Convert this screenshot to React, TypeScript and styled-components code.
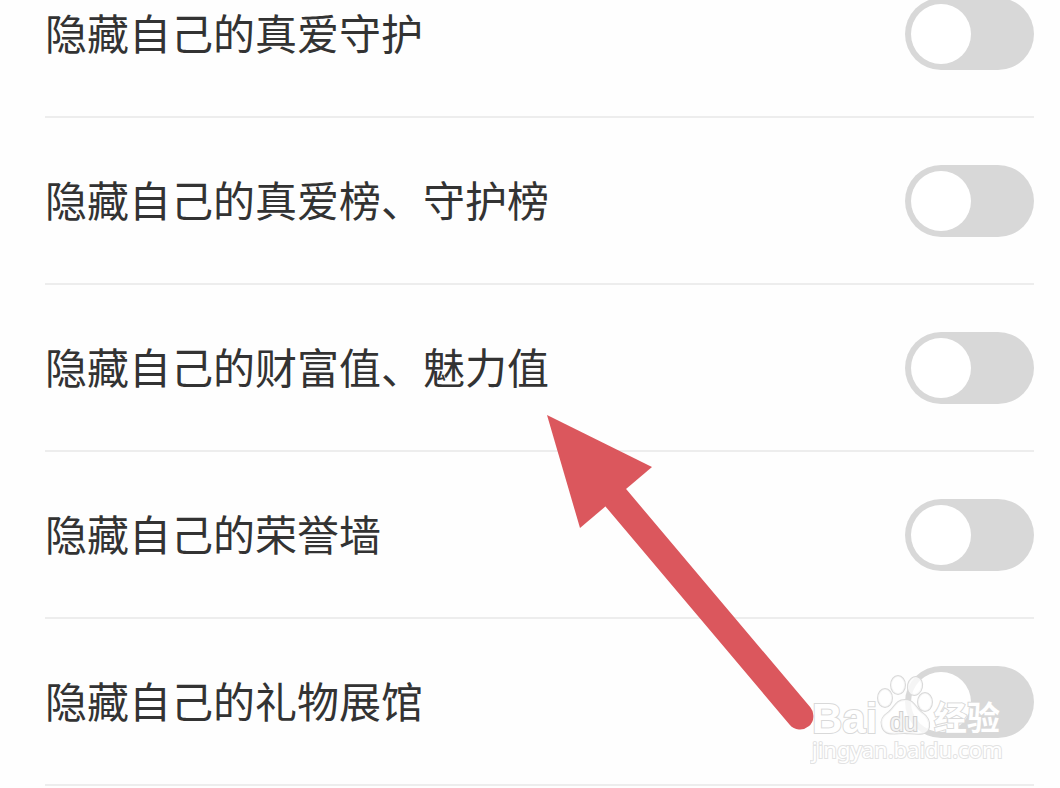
import React, { useState } from "react";
import styled, { createGlobalStyle } from "styled-components";

const GlobalStyle = createGlobalStyle`
  * { box-sizing: border-box; }
  body {
    margin: 0;
    background: #fefefe;
    color: #333;
    font-family: "Noto Sans CJK SC", sans-serif;
  }
`;

const Page = styled.main`
  position: relative;
  overflow: hidden;
  min-height: 100vh;
  padding: 0 26px 0 45px;
`;

/* The list is scrolled part of the way into its first row. */
const SettingList = styled.ul`
  list-style: none;
  margin: -49px 0 0;
  padding: 0;
`;

const SettingRow = styled.li`
  border-bottom: 2px solid #ededed;
`;

const SettingLabel = styled.label`
  display: flex;
  align-items: center;
  justify-content: space-between;
  height: 165px;
  font-size: 42px;
  line-height: 60px;
  cursor: pointer;
`;

const SettingName = styled.span`
  padding-bottom: 3px;
`;

const Switch = styled.input`
  appearance: none;
  flex: none;
  display: flex;
  align-items: center;
  width: 129px;
  height: 72px;
  margin: 0;
  padding: 0 6px;
  border-radius: 36px;
  background: #d8d8d8;
  cursor: pointer;

  &::before {
    content: "";
    width: 60px;
    height: 60px;
    border-radius: 50%;
    background: #fff;
  }

  &:checked {
    justify-content: flex-end;
    background: #4cd964;
  }
`;

const Arrow = styled.svg`
  position: absolute;
  left: 546px;
  top: 414px;
  pointer-events: none;
`;

const Watermark = styled.svg`
  position: absolute;
  right: 50px;
  top: 666px;
  pointer-events: none;
  fill: rgba(255, 255, 255, 0.75);
  stroke: #d9d9d9;
  stroke-width: 2px;
  paint-order: stroke;
  font-weight: 700;
`;

const settings = [
  "隐藏自己的真爱守护",
  "隐藏自己的真爱榜、守护榜",
  "隐藏自己的财富值、魅力值",
  "隐藏自己的荣誉墙",
  "隐藏自己的礼物展馆",
];

function Setting({ name }: { name: string }) {
  const [on, setOn] = useState(false);
  return (
    <SettingRow>
      <SettingLabel>
        <SettingName>{name}</SettingName>
        <Switch type="checkbox" role="switch" checked={on} onChange={() => setOn(!on)} />
      </SettingLabel>
    </SettingRow>
  );
}

export default function App() {
  return (
    <Page>
      <GlobalStyle />
      <SettingList>
        {settings.map((name) => (
          <Setting key={name} name={name} />
        ))}
      </SettingList>
      <Arrow width="270" height="320" viewBox="546 414 270 320" aria-hidden="true">
        <path d="M616 498L800 716" stroke="#db575d" strokeWidth="27" strokeLinecap="round" />
        <path d="M547 415L652 467L580 528Z" fill="#db575d" />
      </Arrow>
      <Watermark width="200" height="104" viewBox="810 666 200 104">
        <text x="812" y="733" fontSize="42" fontFamily="Liberation Sans, sans-serif" fill="#fff">Bai</text>
        <ellipse cx="885" cy="698" rx="7" ry="9" />
        <ellipse cx="898" cy="685" rx="7" ry="9" />
        <ellipse cx="915" cy="686" rx="7" ry="9" transform="rotate(12 915 686)" />
        <ellipse cx="925" cy="702" rx="7" ry="9" />
        <path d="M905 700C896 700 895 707 889 712C883 716 880 720 882 726C884 735 892 734 905 733C918 734 927 736 929 727C930 720 927 716 921 712C915 707 914 700 905 700Z" />
        <text x="890" y="731" fontSize="25" fontFamily="Liberation Sans, sans-serif" fontWeight="400" stroke="#cfcfcf">du</text>
        <text x="934" y="730" fontSize="33" fontFamily="Noto Sans CJK SC, sans-serif" fill="#fff">经验</text>
        <text x="812" y="758" fontSize="22" fontFamily="Noto Sans, sans-serif" fontWeight="400" fill="#fff" stroke="#e2e2e2">jingyan.baidu.com</text>
      </Watermark>
    </Page>
  );
}
